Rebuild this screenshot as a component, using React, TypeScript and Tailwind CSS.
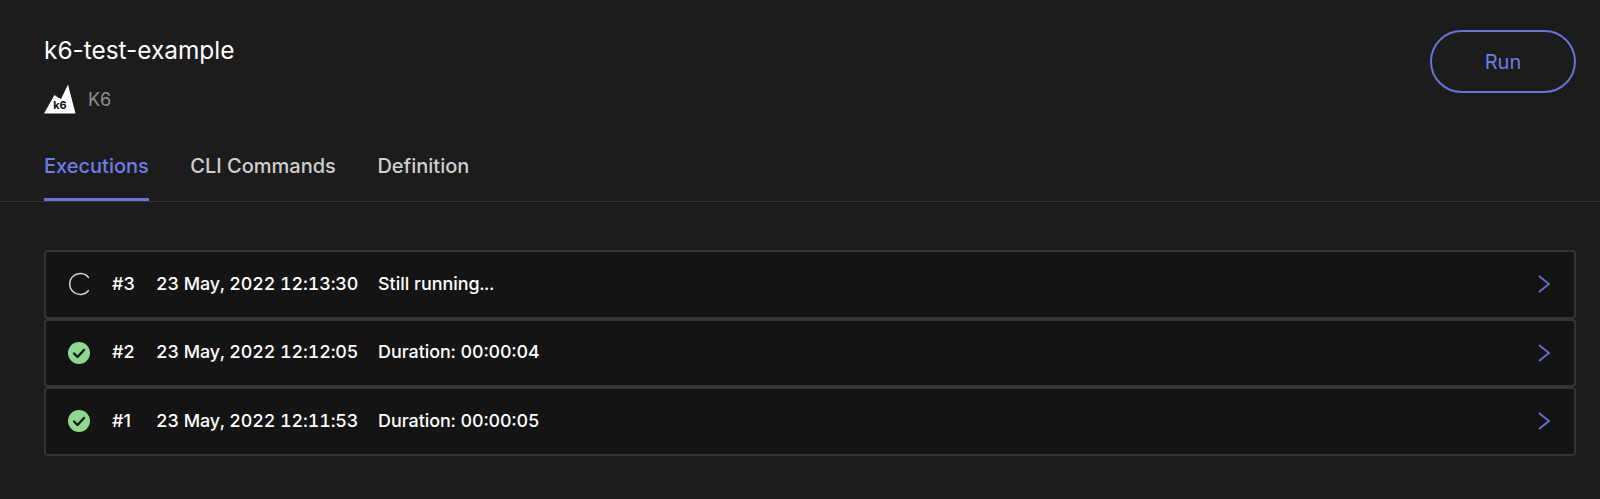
import React from 'react';

type Execution = {
  id: number;
  date: string;
  detail: string;
  running?: boolean;
};

const executions: Execution[] = [
  { id: 3, date: '23 May, 2022 12:13:30', detail: 'Still running...', running: true },
  { id: 2, date: '23 May, 2022 12:12:05', detail: 'Duration: 00:00:04' },
  { id: 1, date: '23 May, 2022 12:11:53', detail: 'Duration: 00:00:05' },
];

const K6Logo: React.FC = () => (
  <svg width="32" height="30" viewBox="0 0 32 30" className="block">
    <path d="M0 29.5 L10.5 11 L14 13.5 L17 15 L24 0.5 L31.5 29.5 Z" fill="#ffffff" />
    <text x="16" y="25" textAnchor="middle" fontSize="11" fontWeight="700" fill="#111111" fontFamily="Inter, sans-serif">
      k6
    </text>
  </svg>
);

const StatusIcon: React.FC<{ running?: boolean }> = ({ running }) =>
  running ? (
    <svg width="24" height="24" viewBox="0 0 24 24" fill="none" className="block">
      <path d="M21.5 5.5 A10.5 10.5 0 1 0 21.5 18.5" stroke="#d4d4d4" strokeWidth="1.5" strokeLinecap="round" />
    </svg>
  ) : (
    <svg width="24" height="24" viewBox="0 0 24 24" fill="none" className="block">
      <circle cx="12" cy="12" r="11" fill="#8fd88f" />
      <path d="M7 12.5 L10.5 16 L17 9" stroke="#141414" strokeWidth="2.4" strokeLinecap="round" strokeLinejoin="round" />
    </svg>
  );

const Chevron: React.FC = () => (
  <svg width="12" height="18" viewBox="0 0 12 18" fill="none" className="block">
    <path d="M1 1 L11 9 L1 17" stroke="#6872d8" strokeWidth="1.75" />
  </svg>
);

const App: React.FC = () => {
  return (
    <div className="w-[1600px] h-[499px] overflow-hidden bg-[#1c1c1c] font-['Inter',sans-serif]">
      <header className="border-b border-[#343434] h-[202px] flex flex-col">
        <div className="flex justify-between pl-[44px] pr-[24px] pt-[30px]">
          <div>
            <h1 className="text-[24.4px] leading-[40px] font-normal text-white">k6-test-example</h1>
            <div className="flex items-center gap-[12px] mt-[14px]">
              <K6Logo />
              <span className="text-[18px] text-[#8f8f8f]">K6</span>
            </div>
          </div>
          <button className="w-[146px] h-[63px] rounded-full border-2 border-[#6872d8] text-[#6f7be6] text-[20px] font-normal">
            Run
          </button>
        </div>
        <nav className="flex gap-[41.5px] px-[44px] mt-auto">
          <a className="h-[50px] text-[20px] font-medium text-[#6f7be6] border-b-[3px] border-[#6872d8]">Executions</a>
          <a className="h-[50px] text-[20px] font-medium text-[#cfcfcf]">CLI Commands</a>
          <a className="h-[50px] text-[20px] font-medium text-[#cfcfcf]">Definition</a>
        </nav>
      </header>

      <main className="pt-[48px] pl-[44px] pr-[24px]">
        {executions.map((execution) => (
          <div
            key={execution.id}
            className="flex items-center h-[68.5px] pl-[21px] pr-[24px] bg-[#141414] border-2 border-[#343434] rounded-[4px] text-[17.9px] font-[450] text-white"
          >
            <StatusIcon running={execution.running} />
            <span className="ml-[21px] w-[44px]">#{execution.id}</span>
            <span className="w-[222px] tabular-nums tracking-[-0.1px]">{execution.date}</span>
            <span className="tabular-nums">{execution.detail}</span>
            <span className="ml-auto">
              <Chevron />
            </span>
          </div>
        ))}
      </main>
    </div>
  );
};

export default App;
